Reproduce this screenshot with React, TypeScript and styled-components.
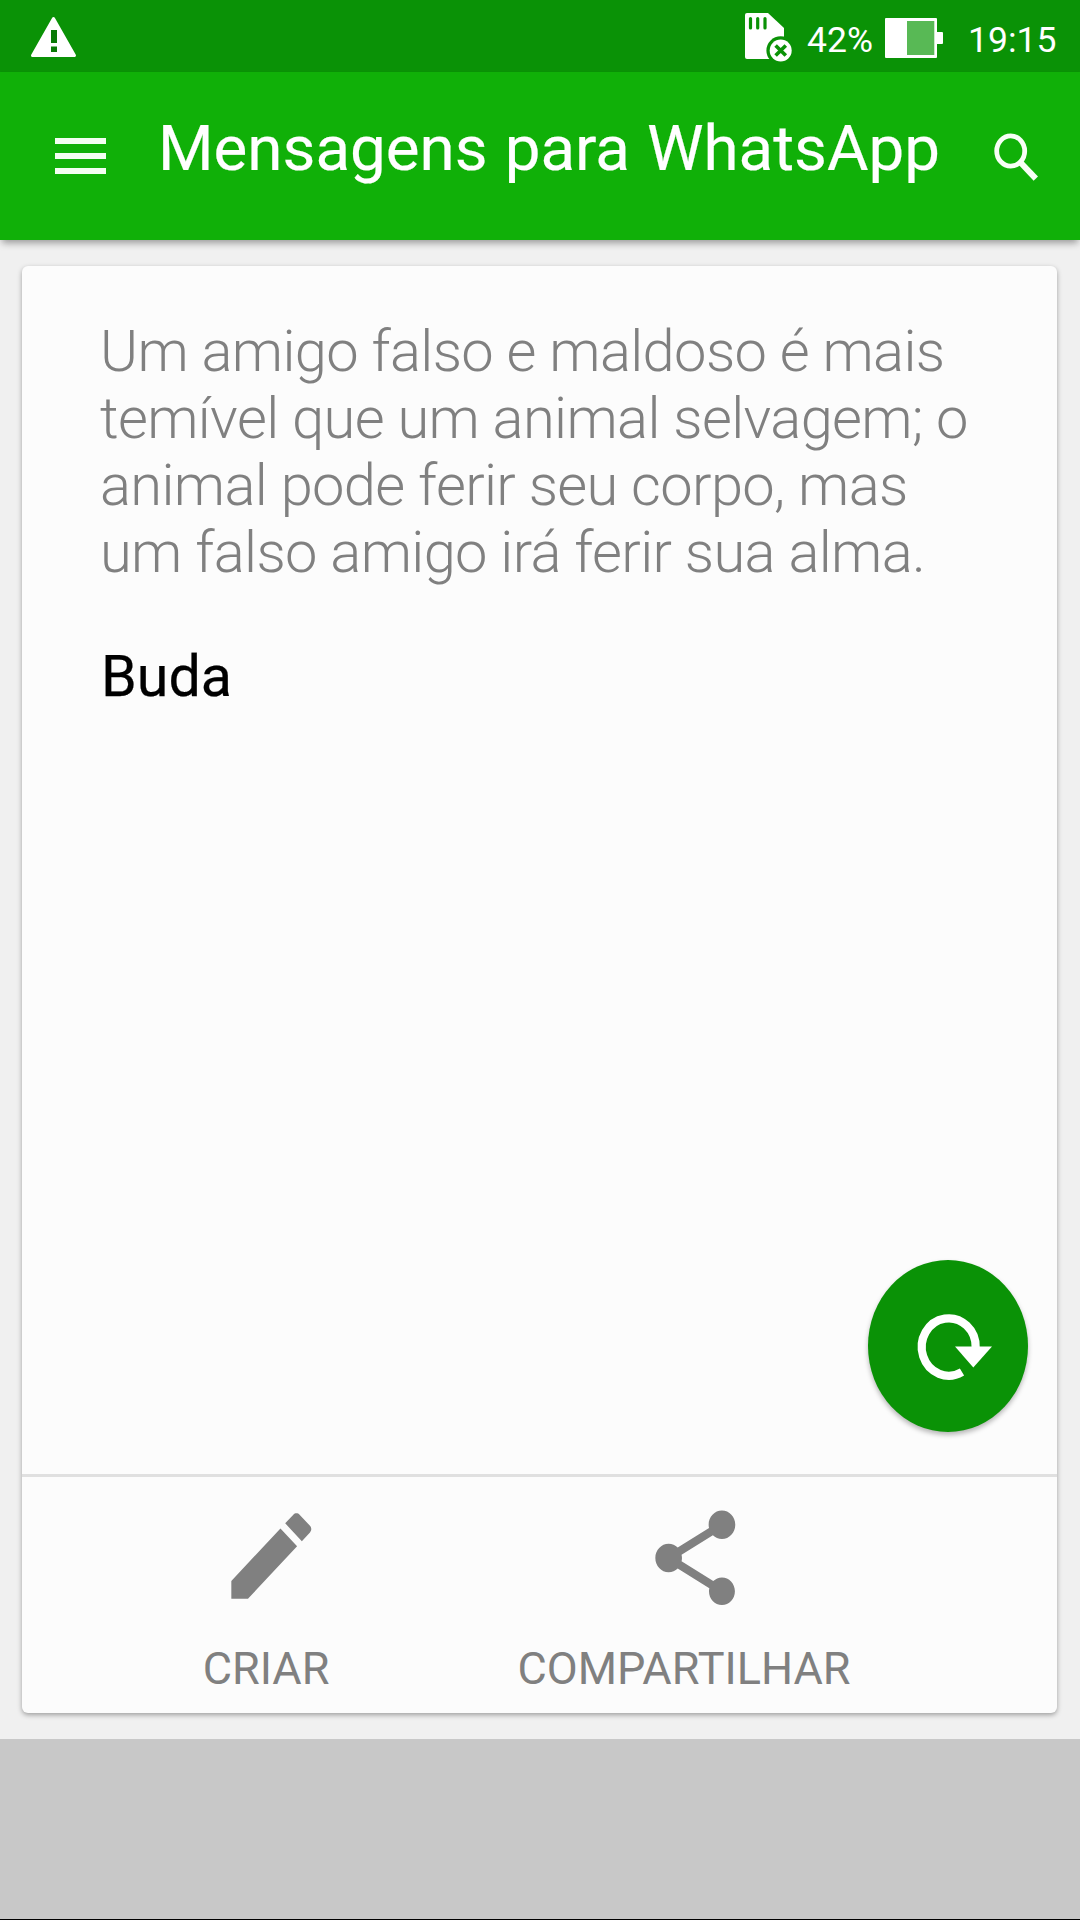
import React from 'react';
import styled, { createGlobalStyle } from 'styled-components';

const GlobalStyle = createGlobalStyle`
  * { box-sizing: border-box; }
  html, body { margin: 0; padding: 0; }
  body { font-family: Roboto, "Liberation Sans", sans-serif; background: #c8c8c8; }
  svg { display: block; flex: none; }
  button { border: 0; padding: 0; margin: 0; background: none; font: inherit; color: inherit; }
`;

const Screen = styled.div`
  width: 1080px;
  height: 1920px;
  display: flex;
  flex-direction: column;
  overflow: hidden;
  background: #f0f0f0;
`;

const StatusBar = styled.header`
  height: 72px;
  flex: none;
  display: flex;
  align-items: flex-start;
  justify-content: space-between;
  padding: 0 24px 0 30px;
  background: #0a9206;
  color: #fff;
`;

const StatusGroup = styled.div`
  display: flex;
  align-items: flex-start;
`;

const StatusText = styled.span<{ $width: number }>`
  width: ${(p) => p.$width}px;
  padding-top: 20px;
  font-size: 35.5px;
  line-height: 40px;
  white-space: nowrap;
`;

const AppBar = styled.nav`
  height: 168px;
  flex: none;
  display: flex;
  align-items: flex-start;
  background: #10b008;
  color: #fff;
  box-shadow: 0 5px 7px -2px rgba(0, 0, 0, 0.36);
`;

const IconButton = styled.button<{ $left: number; $top: number }>`
  flex: none;
  margin: ${(p) => p.$top}px 0 0 ${(p) => p.$left}px;
`;

const Title = styled.h1`
  flex: none;
  width: 822px;
  margin: 40px 0 0 51px;
  font-size: 63.7px;
  font-weight: 400;
  line-height: 74px;
  word-spacing: 1.2px;
  -webkit-text-stroke: 0.2px #fff;
  white-space: nowrap;
`;

const Main = styled.main`
  height: 1499px;
  flex: none;
  padding: 26px 23px 26px 22px;
`;

const Card = styled.article`
  position: relative;
  height: 1447px;
  display: flex;
  flex-direction: column;
  border-radius: 6px;
  background: #fcfcfc;
  box-shadow: 0 2px 5px rgba(0, 0, 0, 0.34);
`;

const Message = styled.section`
  height: 1208px;
  flex: none;
  padding: 52px 60px 0 78px;
`;

const Quote = styled.p`
  margin: 0;
  color: #808080;
  font-size: 57.8px;
  font-weight: 300;
  line-height: 67.1px;
  letter-spacing: -0.63px;
  white-space: nowrap;
`;

const Author = styled.p`
  margin: 57px 0 0 1px;
  color: #000;
  font-size: 57.4px;
  line-height: 68px;
  -webkit-text-stroke: 0.25px #000;
`;

const Actions = styled.footer`
  flex: 1;
  display: flex;
  border-top: 3px solid #e0e0e0;
`;

const ActionButton = styled.button<{ $width: number; $start: number }>`
  width: ${(p) => p.$width}px;
  margin-left: ${(p) => p.$start}px;
  flex: none;
  display: flex;
  flex-direction: column;
  align-items: center;
`;

const ActionIcon = styled.svg<{ $shift: number; $top: number }>`
  width: 106.6px;
  height: 114px;
  margin: ${(p) => p.$top}px 0 ${(p) => 52 - p.$top}px ${(p) => p.$shift}px;
`;

const ActionLabel = styled.span`
  color: #808080;
  font-size: 45px;
  line-height: 52px;
`;

const RefreshButton = styled.button`
  position: absolute;
  right: 29.5px;
  top: 994px;
  width: 160px;
  height: 172px;
  border-radius: 50%;
  background: #0a9206;
  box-shadow: 0 3px 5px rgba(0, 0, 0, 0.28);
`;

const NavArea = styled.div`
  flex: 1;
  background: #c8c8c8;
  border-bottom: 1px solid #000;
`;

const WarningIcon = () => (
  <svg width="48" height="72" viewBox="30 0 48 72">
    <path d="M53.5 18.5L74.5 55.5H32.5Z" fill="#fff" stroke="#fff" strokeWidth="3" strokeLinejoin="round" />
    <path d="M51 30h6v13h-6zM51 46.5h6V52h-6z" fill="#0a7a06" />
  </svg>
);

const SdCardIcon = () => (
  <svg width="63" height="72" viewBox="744 0 63 72">
    <path d="M747 13H768L784 28V59H747Q745 59 745 57V15Q745 13 747 13Z" fill="#fff" />
    <path d="M750.5 18.5V28M757.7 18.5V28M765 18.5V28" stroke="#0a9206" strokeWidth="3.2" strokeLinecap="round" />
    <circle cx="780.7" cy="50.5" r="14.3" fill="#0a9206" />
    <circle cx="780.7" cy="50.5" r="11" fill="#fff" />
    <path d="M775.6 45.4l10.2 10.2M785.8 45.4l-10.2 10.2" stroke="#0a9206" strokeWidth="3.6" />
  </svg>
);

const BatteryIcon = () => (
  <svg width="84" height="72" viewBox="884 0 84 72">
    <rect x="885" y="18" width="52" height="40" rx="1" fill="#fff" />
    <rect x="936" y="32" width="7" height="12" rx="1" fill="#fff" />
    <rect x="907" y="21" width="27.3" height="34" fill="#58b955" />
  </svg>
);

const MenuIcon = () => (
  <svg width="52" height="38" viewBox="0 0 52 38">
    <path d="M0 0h51v6H0zM0 15h51v6H0zM0 30h51v6H0z" fill="#f4fff2" />
  </svg>
);

const SearchIcon = () => (
  <svg width="46" height="48" viewBox="0 0 46 48">
    <ellipse cx="16.7" cy="18" rx="14" ry="15.2" fill="none" stroke="#f8fff6" strokeWidth="4.8" />
    <path d="M27 30L41.8 45.6" stroke="#f8fff6" strokeWidth="6" />
  </svg>
);

const RefreshIcon = () => (
  <svg width="160" height="172" viewBox="0 0 160 172">
    <path d="M107.7 88A27 28.7 0 1 0 94 112" fill="none" stroke="#fff" strokeWidth="8.2" />
    <path d="M87 86.5H124L105.3 107.4Z" fill="#fff" />
  </svg>
);

const PENCIL =
  'M3 17.25V21h3.75L17.81 9.94l-3.75-3.75L3 17.25zM20.71 7.04c.39-.39.39-1.02 0-1.41l-2.34-2.34c-.39-.39-1.02-.39-1.41 0l-1.83 1.83 3.75 3.75 1.83-1.83z';
const SHARE =
  'M18 16.08c-.76 0-1.44.3-1.96.77L8.91 12.7c.05-.23.09-.46.09-.7s-.04-.47-.09-.7l7.05-4.11c.54.5 1.25.81 2.04.81 1.66 0 3-1.34 3-3s-1.34-3-3-3-3 1.34-3 3c0 .24.04.47.09.7L8.04 9.81C7.5 9.31 6.79 9 6 9c-1.66 0-3 1.34-3 3s1.34 3 3 3c.79 0 1.5-.31 2.04-.81l7.12 4.16c-.05.21-.08.43-.08.65 0 1.61 1.31 2.92 2.92 2.92 1.61 0 2.92-1.31 2.92-2.92s-1.31-2.92-2.92-2.92z';

const actions = [
  { label: 'CRIAR', path: PENCIL, width: 486, start: 1, shift: 11, top: 22 },
  { label: 'COMPARTILHAR', path: SHARE, width: 350, start: 0, shift: 22, top: 24 },
];

export default function App() {
  return (
    <Screen>
      <GlobalStyle />
      <StatusBar>
        <WarningIcon />
        <StatusGroup>
          <SdCardIcon />
          <StatusText $width={77}>42%</StatusText>
          <BatteryIcon />
          <StatusText $width={88}>19:15</StatusText>
        </StatusGroup>
      </StatusBar>
      <AppBar>
        <IconButton $left={55} $top={66} aria-label="Menu">
          <MenuIcon />
        </IconButton>
        <Title>Mensagens para WhatsApp</Title>
        <IconButton $left={14} $top={61} aria-label="Buscar">
          <SearchIcon />
        </IconButton>
      </AppBar>
      <Main>
        <Card>
          <Message>
            <Quote>
              Um amigo falso e maldoso é mais
              <br />
              temível que um animal selvagem; o
              <br />
              animal pode ferir seu corpo, mas
              <br />
              um falso amigo irá ferir sua alma.
            </Quote>
            <Author>Buda</Author>
          </Message>
          <Actions>
            {actions.map((a) => (
              <ActionButton key={a.label} $width={a.width} $start={a.start}>
                <ActionIcon
                  $shift={a.shift}
                  $top={a.top}
                  viewBox="0 0 24 24"
                  preserveAspectRatio="none"
                >
                  <path d={a.path} fill="#808080" />
                </ActionIcon>
                <ActionLabel>{a.label}</ActionLabel>
              </ActionButton>
            ))}
          </Actions>
          <RefreshButton aria-label="Atualizar">
            <RefreshIcon />
          </RefreshButton>
        </Card>
      </Main>
      <NavArea />
    </Screen>
  );
}
